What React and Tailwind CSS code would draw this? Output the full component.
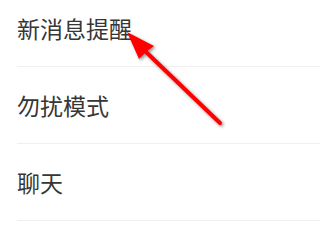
import React from 'react';

const ITEMS = ['新消息提醒', '勿扰模式', '聊天'];

const App = () => {
  return (
    <div
      className="relative w-[320px] h-[240px] overflow-hidden bg-white"
      style={{ fontFamily: '"Noto Sans CJK SC", "Noto Sans", sans-serif' }}
    >
      <div className="-mt-[10px] flex flex-col">
        {ITEMS.map((label) => (
          <div key={label} className="ml-[17px] h-[77px] flex items-center border-b border-[#f0f0f0]">
            <span className="text-[23px] leading-none text-[#363636]">{label}</span>
          </div>
        ))}
      </div>

      {/* annotation arrow */}
      <svg className="absolute inset-0 pointer-events-none" width="320" height="240" viewBox="0 0 320 240">
        <defs>
          <filter id="sh" x="-20%" y="-20%" width="140%" height="140%">
            <feDropShadow dx="1.5" dy="1.5" stdDeviation="1.5" floodColor="#000" floodOpacity="0.45" />
          </filter>
        </defs>
        <g filter="url(#sh)">
          <line x1="220" y1="123" x2="145" y2="51" stroke="#ff0000" strokeWidth="4" strokeLinecap="round" />
          <polygon points="127,32 154,46 146,52 139,59" fill="#ff0000" />
        </g>
      </svg>
    </div>
  );
};

export default App;
